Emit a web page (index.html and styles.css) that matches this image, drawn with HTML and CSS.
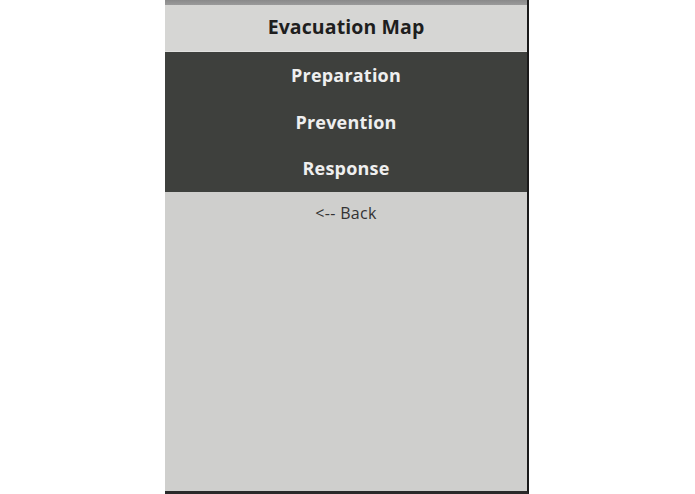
FILE: index.html
```html
<!DOCTYPE html>
<html>
<head>
<meta charset="utf-8">
<link rel="stylesheet" href="styles.css">
</head>
<body>
<div class="stage">
  <div class="phone">
    <div class="status"></div>
    <div class="title">Evacuation Map</div>
    <div class="menu">
      <div class="item">Preparation</div>
      <div class="item">Prevention</div>
      <div class="item">Response</div>
    </div>
    <div class="content">
      <div class="back">&lt;-- Back</div>
    </div>
  </div>
</div>
</body>
</html>
```
FILE: styles.css
```css
html, body {
  margin: 0;
  padding: 0;
  background: #ffffff;
}
.stage {
  width: 695px;
  height: 494px;
  display: flex;
  justify-content: flex-start;
  padding-left: 165px;
  box-sizing: border-box;
}
.phone {
  width: 364px;
  height: 494px;
  box-sizing: border-box;
  border-right: 2px solid #1a1a1a;
  border-bottom: 3px solid #2a2a2a;
  display: flex;
  flex-direction: column;
  background: #cfcfcd;
  font-family: "Open Sans", "DejaVu Sans", sans-serif;
}
.status {
  height: 5px;
  background: linear-gradient(#8a8a8a, #9a9a9a);
}
.title {
  height: 47px;
  box-sizing: border-box;
  padding-bottom: 3px;
  background: #d6d6d4;
  border-bottom: 1px solid #e2e2e0;
  display: flex;
  align-items: center;
  justify-content: center;
  font-weight: 700;
  font-size: 19.5px;
  letter-spacing: 0.1px;
  color: #1e1e1e;
}
.menu {
  background: #3e403d;
  height: 140px;
  display: flex;
  flex-direction: column;
  box-sizing: border-box;
}
.item {
  height: 46.5px;
  display: flex;
  align-items: center;
  justify-content: center;
  color: #efefef;
  font-weight: 700;
  font-size: 18px;
  letter-spacing: 0.2px;
}
.content {
  flex: 1;
  display: flex;
  flex-direction: column;
  align-items: center;
  padding-top: 10px;
}
.back {
  font-size: 16px;
  letter-spacing: 0.3px;
  color: #333333;
}
```
